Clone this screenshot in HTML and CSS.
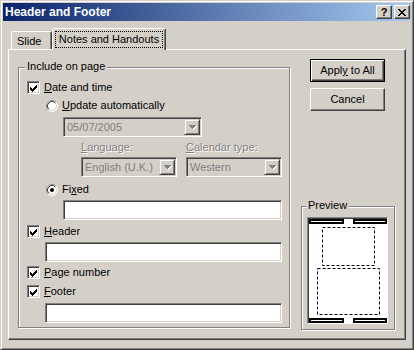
FILE: index.html
```html
<!DOCTYPE html>
<html>
<head>
<meta charset="utf-8">
<title>Header and Footer</title>
<link rel="stylesheet" href="styles.css">
</head>
<body>
<div class="window">
  <div class="titlebar">
    <span class="title">Header and Footer</span>
    <div class="title-btns">
      <span class="tbtn help">?</span>
      <span class="tbtn close"><svg width="8" height="7" viewBox="0 0 8 7" shape-rendering="crispEdges"><path d="M0 0h2v1h-2z M6 0h2v1h-2z M1 1h2v1h-2z M5 1h2v1h-2z M2 2h4v1h-4z M3 3h2v1h-2z M2 4h4v1h-4z M1 5h2v1h-2z M5 5h2v1h-2z M0 6h2v1h-2z M6 6h2v1h-2z" fill="#000"/></svg></span>
    </div>
  </div>
  <div class="body">
    <div class="tabs">
      <div class="tab">Slide</div>
      <div class="tab active"><span class="focus">Notes and Handouts</span></div>
    </div>
    <div class="panel">
      <div class="group main">
        <span class="legend">Include on page</span>
        <div class="row r-date">
          <span class="check"><svg width="9" height="9" viewBox="0 0 9 9" shape-rendering="crispEdges"><path d="M1 4h1v3h-1z M2 5h1v3h-1z M3 6h1v3h-1z M4 5h1v3h-1z M5 4h1v3h-1z M6 3h1v3h-1z M7 2h1v3h-1z" fill="#000"/></svg></span>
          <span><u>D</u>ate and time</span>
        </div>
        <div class="row r-update">
          <span class="radio"><svg width="12" height="12" viewBox="0 0 12 12"><circle cx="6" cy="6" r="5.5" fill="#fff" stroke="#fff"/><path d="M2.11 9.89 A5.5 5.5 0 0 1 9.89 2.11" fill="none" stroke="#808080"/><circle cx="6" cy="6" r="4.5" fill="#fff" stroke="#d4d0c8"/><path d="M2.82 9.18 A4.5 4.5 0 0 1 9.18 2.82" fill="none" stroke="#404040"/></svg></span>
          <span><u>U</u>pdate automatically</span>
        </div>
        <div class="field combo c-date">
          <span class="ctext">05/07/2005</span>
          <span class="drop"><svg width="8" height="5" viewBox="0 0 8 5" shape-rendering="crispEdges"><path d="M1 1h7v1h-1v1h-1v1h-1v1h-1v-1h-1v-1h-1v-1h-1z" fill="#fff"/><path d="M0 0h7v1h-1v1h-1v1h-1v1h-1v-1h-1v-1h-1v-1h-1z" fill="#808080"/></svg></span>
        </div>
        <div class="calgrid">
          <span class="dis"><u>L</u>anguage:</span>
          <span class="dis"><u>C</u>alendar type:</span>
          <div class="field combo">
            <span class="ctext">English (U.K.)</span>
            <span class="drop"><svg width="8" height="5" viewBox="0 0 8 5" shape-rendering="crispEdges"><path d="M1 1h7v1h-1v1h-1v1h-1v1h-1v-1h-1v-1h-1v-1h-1z" fill="#fff"/><path d="M0 0h7v1h-1v1h-1v1h-1v1h-1v-1h-1v-1h-1v-1h-1z" fill="#808080"/></svg></span>
          </div>
          <div class="field combo">
            <span class="ctext">Western</span>
            <span class="drop"><svg width="8" height="5" viewBox="0 0 8 5" shape-rendering="crispEdges"><path d="M1 1h7v1h-1v1h-1v1h-1v1h-1v-1h-1v-1h-1v-1h-1z" fill="#fff"/><path d="M0 0h7v1h-1v1h-1v1h-1v1h-1v-1h-1v-1h-1v-1h-1z" fill="#808080"/></svg></span>
          </div>
        </div>
        <div class="row r-fixed">
          <span class="radio"><svg width="12" height="12" viewBox="0 0 12 12"><circle cx="6" cy="6" r="5.5" fill="#fff" stroke="#fff"/><path d="M2.11 9.89 A5.5 5.5 0 0 1 9.89 2.11" fill="none" stroke="#808080"/><circle cx="6" cy="6" r="4.5" fill="#fff" stroke="#d4d0c8"/><path d="M2.82 9.18 A4.5 4.5 0 0 1 9.18 2.82" fill="none" stroke="#404040"/><circle cx="6" cy="6" r="2" fill="#000"/></svg></span>
          <span>Fi<u>x</u>ed</span>
        </div>
        <div class="field input i-fixed"></div>
        <div class="row r-header">
          <span class="check"><svg width="9" height="9" viewBox="0 0 9 9" shape-rendering="crispEdges"><path d="M1 4h1v3h-1z M2 5h1v3h-1z M3 6h1v3h-1z M4 5h1v3h-1z M5 4h1v3h-1z M6 3h1v3h-1z M7 2h1v3h-1z" fill="#000"/></svg></span>
          <span><u>H</u>eader</span>
        </div>
        <div class="field input i-header"></div>
        <div class="row r-page">
          <span class="check"><svg width="9" height="9" viewBox="0 0 9 9" shape-rendering="crispEdges"><path d="M1 4h1v3h-1z M2 5h1v3h-1z M3 6h1v3h-1z M4 5h1v3h-1z M5 4h1v3h-1z M6 3h1v3h-1z M7 2h1v3h-1z" fill="#000"/></svg></span>
          <span><u>P</u>age number</span>
        </div>
        <div class="row r-footer">
          <span class="check"><svg width="9" height="9" viewBox="0 0 9 9" shape-rendering="crispEdges"><path d="M1 4h1v3h-1z M2 5h1v3h-1z M3 6h1v3h-1z M4 5h1v3h-1z M5 4h1v3h-1z M6 3h1v3h-1z M7 2h1v3h-1z" fill="#000"/></svg></span>
          <span><u>F</u>ooter</span>
        </div>
        <div class="field input i-footer"></div>
      </div>
      <div class="side">
        <div class="btn default"><span>Appl<u>y</u> to All</span></div>
        <div class="btn cancel"><span>Cancel</span></div>
        <div class="group preview">
          <span class="legend">Preview</span>
          <div class="page">
            <svg width="79" height="105" viewBox="0 0 79 105">
              <g shape-rendering="crispEdges">
                <rect x="1" y="1" width="35" height="5" fill="#000"/>
                <rect x="3" y="3" width="31" height="1" fill="#fff"/>
                <rect x="45" y="1" width="34" height="5" fill="#000"/>
                <rect x="47" y="3" width="30" height="1" fill="#fff"/>
                <rect x="1" y="100" width="35" height="5" fill="#000"/>
                <rect x="3" y="102" width="31" height="1" fill="#fff"/>
                <rect x="45" y="100" width="34" height="5" fill="#000"/>
                <rect x="47" y="102" width="30" height="1" fill="#fff"/>
              </g>
              <rect x="14.5" y="9.5" width="52" height="38" fill="none" stroke="#000" stroke-dasharray="3 2"/>
              <rect x="9.5" y="50.5" width="62" height="46" fill="none" stroke="#000" stroke-dasharray="3 2"/>
            </svg>
          </div>
        </div>
      </div>
    </div>
  </div>
</div>
</body>
</html>
```

FILE: styles.css
```css
* { box-sizing: border-box; }
html, body { margin: 0; padding: 0; }
body {
  background: #d4d0c8;
  font-family: "Liberation Sans", Arial, sans-serif;
  font-size: 11px;
  line-height: 13px;
  color: #000;
}
u { text-decoration: underline; text-underline-offset: 1px; }

.window {
  width: 414px;
  height: 350px;
  background: #d4d0c8;
  border: 1px solid;
  border-color: #d4d0c8 #404040 #404040 #d4d0c8;
  box-shadow: inset 1px 1px #fff, inset -1px -1px #808080;
  padding: 2px;
  display: flex;
  flex-direction: column;
}

.titlebar {
  height: 18px;
  flex: none;
  background: linear-gradient(to right, #0a246a, #a6caf0);
  display: flex;
  align-items: center;
  justify-content: space-between;
  padding: 0 1px 0 2px;
}
.title { color: #fff; font-weight: bold; font-size: 12px; }
.title-btns { display: flex; gap: 2px; }
.tbtn {
  width: 16px;
  height: 14px;
  background: #d4d0c8;
  border: 1px solid;
  border-color: #fff #404040 #404040 #fff;
  box-shadow: inset -1px -1px #808080;
  display: flex;
  align-items: center;
  justify-content: center;
  font-weight: bold;
  font-size: 11px;
  line-height: 11px;
}
.tbtn svg { display: block; }

.body {
  flex: 1;
  padding: 7px 5px 0 5px;
  display: flex;
  flex-direction: column;
}

.tabs {
  display: flex;
  align-items: flex-end;
  height: 21px;
  padding-left: 3px;
}
.tab {
  width: 41px;
  height: 18px;
  background: #d4d0c8;
  border: 1px solid;
  border-bottom: 0;
  border-color: #fff #404040 transparent #fff;
  border-radius: 2px 2px 0 0;
  box-shadow: inset -1px 0 #808080;
  padding: 3px 0 0 5px;
}
.tab.active {
  position: relative;
  width: 114px;
  height: 22px;
  margin-bottom: -1px;
  padding: 2px 0 0 2px;
}
.focus {
  display: block;
  width: 108px;
  height: 17px;
  border: 1px dotted #000;
  text-align: center;
  line-height: 15px;
}

.panel {
  height: 291px;
  border: 1px solid;
  border-color: #fff #404040 #404040 #fff;
  box-shadow: inset -1px -1px #808080;
  display: flex;
  align-items: flex-start;
  padding: 9px 0 0 9px;
}

.group {
  border: 1px solid #808080;
  box-shadow: inset 1px 1px #fff, 1px 1px #fff;
  display: flex;
  flex-direction: column;
  align-items: flex-start;
}
.legend {
  background: #d4d0c8;
  padding: 0 2px;
  margin: -8px 0 0 6px;
  height: 13px;
}

.main { width: 272px; height: 261px; margin-top: 8px; }

.row { display: flex; align-items: center; height: 13px; gap: 4px; }
.r-date { margin: 8px 0 0 8px; }
.r-update { margin: 5px 0 0 27px; }
.r-fixed { margin: 6px 0 0 27px; }
.r-header { margin: 5px 0 0 8px; }
.r-page { margin: 4px 0 0 8px; }
.r-footer { margin: 6px 0 0 8px; }

.check {
  width: 13px;
  height: 13px;
  flex: none;
  border: 1px solid;
  border-color: #808080 #fff #fff #808080;
  box-shadow: inset 1px 1px #404040, inset -1px -1px #d4d0c8;
  background: #fff;
  display: flex;
  align-items: center;
  justify-content: center;
}
.check svg, .radio svg, .drop svg { display: block; }
.radio { width: 12px; height: 12px; flex: none; }

.field {
  border: 1px solid;
  border-color: #808080 #fff #fff #808080;
  box-shadow: inset 1px 1px #404040, inset -1px -1px #d4d0c8;
  background: #fff;
  height: 20px;
}
.combo {
  background: #d4d0c8;
  display: flex;
  align-items: center;
  padding: 1px;
  color: #808080;
}
.ctext { flex: 1; padding-left: 2px; white-space: nowrap; overflow: hidden; }
.drop {
  width: 16px;
  height: 16px;
  flex: none;
  border: 1px solid;
  border-color: #d4d0c8 #404040 #404040 #d4d0c8;
  box-shadow: inset 1px 1px #fff, inset -1px -1px #808080;
  background: #d4d0c8;
  display: flex;
  align-items: center;
  justify-content: center;
  padding: 1px 0 0 1px;
}
.c-date { width: 139px; margin: 5px 0 0 44px; }

.calgrid {
  display: grid;
  grid-template-columns: 96px 96px;
  grid-template-rows: 13px 20px;
  column-gap: 9px;
  row-gap: 3px;
  margin: 4px 0 0 62px;
}
.dis { color: #808080; text-shadow: 1px 1px #fff; white-space: nowrap; }

.i-fixed { width: 219px; margin: 4px 0 0 44px; }
.i-header { width: 237px; margin: 4px 0 0 26px; }
.i-footer { width: 237px; margin: 5px 0 0 26px; }

.side {
  width: 94px;
  margin-left: 11px;
  display: flex;
  flex-direction: column;
  align-items: flex-start;
}
.btn {
  width: 75px;
  height: 23px;
  margin-left: 9px;
  background: #d4d0c8;
  border: 1px solid;
  border-color: #fff #404040 #404040 #fff;
  box-shadow: inset -1px -1px #808080;
  display: flex;
  align-items: center;
  justify-content: center;
}
.btn.default {
  border: 1px solid #000;
  box-shadow: inset 1px 1px #fff, inset -1px -1px #404040, inset -2px -2px #808080;
}
.btn.cancel { margin-top: 6px; }

.preview { width: 94px; height: 124px; margin-top: 95px; }
.preview .legend { margin-left: 4px; }
.page {
  width: 81px;
  height: 107px;
  margin: 5px 0 0 5px;
  border: 1px solid;
  border-color: #808080 #fff #fff #808080;
  box-shadow: inset 1px 1px #404040;
  background: #fff;
}
.page svg { display: block; }
```
